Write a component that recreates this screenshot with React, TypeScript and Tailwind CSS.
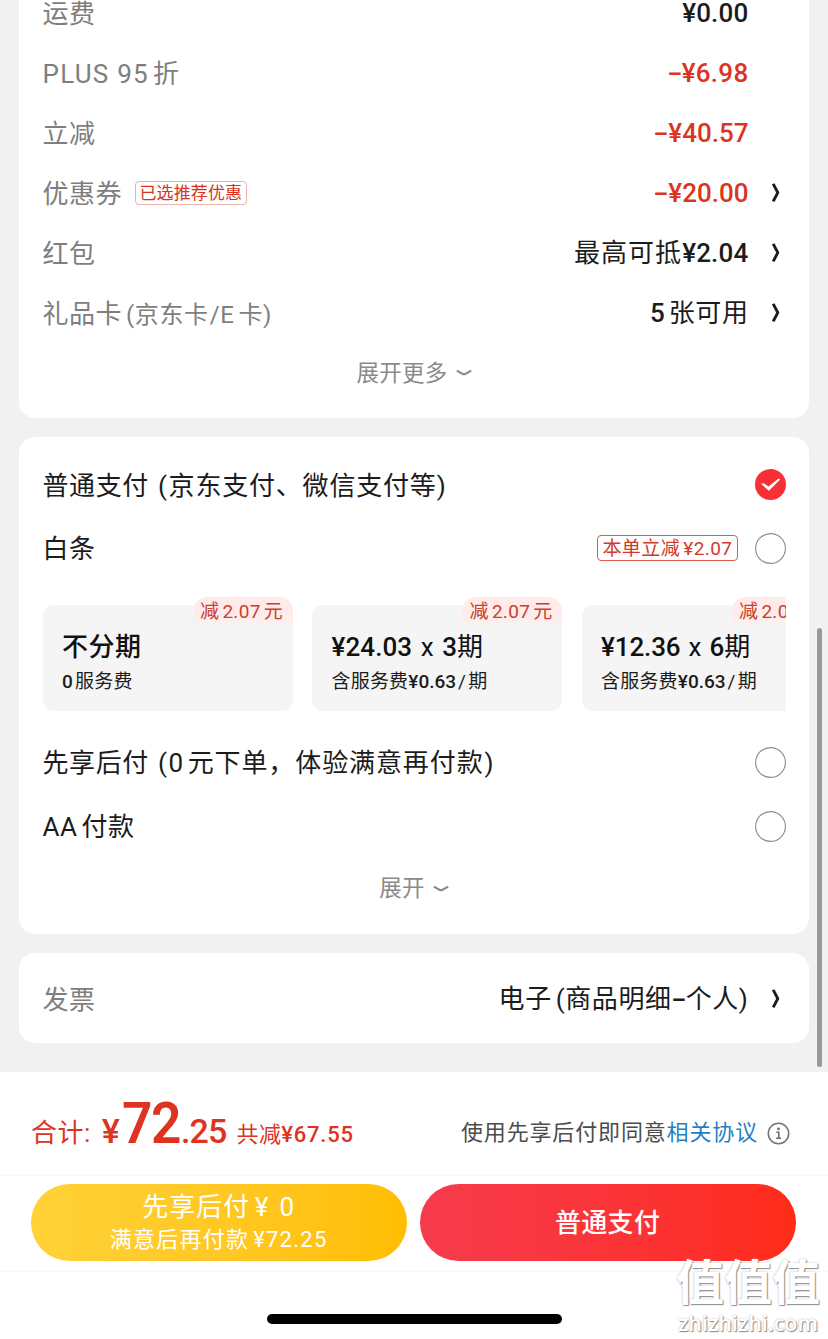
import React, { useState } from 'react';

const RED = 'text-[#dd3320]';

function ArrowRight() {
  return (
    <svg width="12" height="22" viewBox="0 0 12 22" fill="none" className="shrink-0">
      <path d="M3.2 1.8L7.8 10.6L3.2 19.4" stroke="#1c1c1c" strokeWidth="2.9" strokeLinejoin="round" />
    </svg>
  );
}

function ArrowDown() {
  return (
    <svg width="16" height="8" viewBox="0 0 16 8" fill="none" className="shrink-0">
      <path d="M0.8 1.6L6.4 4.7Q8 5.5 9.6 4.7L15.2 1.6" stroke="#8a8a8a" strokeWidth="2.1" />
    </svg>
  );
}

function Dash() {
  return <span className="inline-block w-[14px] scale-x-[1.7] text-center font-medium tracking-normal">-</span>;
}

function Radio({ checked, onClick }: { checked: boolean; onClick: () => void }) {
  return (
    <button onClick={onClick} className="h-[31px] w-[31px] shrink-0">
      <svg width="31" height="31" viewBox="0 0 31 31">
        {checked ? (
          <>
            <circle cx="15.5" cy="15.5" r="15.5" fill="#f92f36" />
            <path d="M6 14.8L8.6 14.2L13.6 17.4L23.6 9.6L25.2 10.6L13.9 21.8Z" fill="#fff" />
          </>
        ) : (
          <circle cx="15.5" cy="15.5" r="14.9" fill="#fff" stroke="#8a8a8a" strokeWidth="1.1" />
        )}
      </svg>
    </button>
  );
}

interface FeeRowProps {
  label: React.ReactNode;
  tag?: string;
  value: React.ReactNode;
  red?: boolean;
  arrow?: boolean;
}

function FeeRow({ label, tag, value, red, arrow }: FeeRowProps) {
  return (
    <div className="flex h-[60px] items-center">
      <span className="pt-px tracking-[0.5px] text-[#7e7e7e]">{label}</span>
      {tag && (
        <span className="ml-[13px] flex h-[24px] items-center rounded-[4px] border border-[#e9b3ad] px-[3.5px] text-[17px] tracking-[0.1px] text-[#d8331f]">
          {tag}
        </span>
      )}
      <span className={`ml-auto ${red ? RED : 'text-[#1c1c1c]'}`}>{value}</span>
      <span className="flex w-[37px] justify-end pr-[4px]">{arrow && <ArrowRight />}</span>
    </div>
  );
}

const plans = [
  {
    id: 'p1',
    title: <span className="font-medium tracking-[0.5px]">不分期</span>,
    fee: <><b className="font-medium">0</b><span className="ml-[2px]">服务费</span></>,
  },
  {
    id: 'p3',
    title: <><b className="font-medium tracking-[0.1px]">¥24.03</b><span className="mx-[8.5px]">x</span><b className="font-medium">3</b>期</>,
    fee: <>含服务费<b className="font-medium tracking-normal">¥0.63</b><span className="mx-[2px]">/</span>期</>,
  },
  {
    id: 'p6',
    title: <><b className="font-medium tracking-[-0.1px]">¥12.36</b><span className="mx-[8px]">x</span><b className="font-medium">6</b>期</>,
    fee: <>含服务费<b className="font-medium tracking-normal">¥0.63</b><span className="mx-[2px]">/</span>期</>,
  },
];

export default function App() {
  const [method, setMethod] = useState('normal');

  return (
    <div className="relative flex h-[1339px] w-[828px] flex-col overflow-hidden bg-[#f1f1f1] font-[Roboto,'Noto_Sans_CJK_SC',sans-serif] text-[26px] leading-none whitespace-nowrap text-[#1c1c1c]">
      <main className="flex h-[1072px] shrink-0 flex-col gap-[19.5px] overflow-hidden pr-[19.5px] pl-[19px]">
        <section className="-mt-[17px] h-[434.5px] shrink-0 rounded-b-[16px] bg-white pr-[23px] pl-[23.5px]">
          <FeeRow label="运费" value={<b className="font-medium tracking-[0.2px]">¥0.00</b>} />
          <FeeRow
            label={<><span className="tracking-[1.25px]">PLUS 95</span><span className="ml-[4px]">折</span></>}
            value={<b className="font-medium tracking-[0.3px]"><Dash />¥6.98</b>}
            red
          />
          <FeeRow label="立减" value={<b className="font-medium"><Dash />¥40.57</b>} red />
          <FeeRow label="优惠券" tag="已选推荐优惠" value={<b className="font-medium"><Dash />¥20.00</b>} red arrow />
          <FeeRow label="红包" value={<><span className="tracking-[1px]">最高可抵</span><b className="font-medium tracking-[0.2px]">¥2.04</b></>} arrow />
          <FeeRow
            label={<>礼品卡<span className="ml-[4px] text-[24px] tracking-[0.6px]">(京东卡<span className="ml-px">/E</span><span className="ml-[4px]">卡)</span></span></>}
            value={<><b className="font-medium">5</b><span className="ml-[4px] tracking-[0.6px]">张可用</span></>}
            arrow
          />
          <div className="flex h-[60px] items-center justify-center gap-[8px] text-[22.5px] tracking-[0.3px] text-[#8a8a8a]">
            展开更多
            <ArrowDown />
          </div>
        </section>

        <section className="h-[496.5px] shrink-0 rounded-[16px] bg-white pt-[15px] pr-[23px] pl-[23.5px]">
          <div className="flex h-[64px] items-center justify-between">
            <span className="pt-[3px] tracking-[0.6px]">
              普通支付<span className="ml-[9px] tracking-[0.8px]">(<span className="ml-px">京东支付、微信支付等</span>)</span>
            </span>
            <Radio checked={method === 'normal'} onClick={() => setMethod('normal')} />
          </div>
          <div className="flex h-[64px] items-center">
            <span className="pt-[2px] tracking-[0.5px]">白条</span>
            <span className="mr-[17px] ml-auto flex h-[26px] items-center rounded-[4px] border border-[#dc5b4d] px-[4px] pt-px text-[19px] tracking-[0.45px] text-[#cf3a2a]">
              本单立减<span className="ml-[3px]">¥2.07</span>
            </span>
            <Radio checked={method === 'baitiao'} onClick={() => setMethod('baitiao')} />
          </div>

          <div className="flex h-[131px] items-end gap-[19.5px] overflow-hidden">
            {plans.map((plan) => (
              <div key={plan.id} className="relative flex h-[106px] w-[250px] shrink-0 flex-col rounded-[11px] bg-[#f5f5f5] pl-[19.5px]">
                <div className="absolute -top-[8px] right-0 h-[32px] w-[100px] rounded-l-[14px] rounded-tr-[14px] bg-linear-to-b from-[#ffebe9] via-[#ffebe9] to-[#f5f5f5] pt-[5px] pr-[2px] text-center text-[19px] tracking-[0.3px] text-[#c8402f]">
                  减<span className="mx-[3px]">2.07</span>元
                </div>
                <div className="mt-[24px] flex h-[36px] items-center text-[#111]">{plan.title}</div>
                <div className="mt-[3px] flex h-[26px] items-center text-[19px] tracking-[0.2px]">{plan.fee}</div>
              </div>
            ))}
          </div>

          <div className="mt-[19px] flex h-[64px] items-center justify-between">
            <span className="pt-[2px] tracking-[0.6px]">
              先享后付<span className="ml-[9px]">(</span><span className="ml-px">0</span><span className="ml-[4px] tracking-[0.9px]">元下单，体验满意再付款<span className="ml-px">)</span></span>
            </span>
            <Radio checked={method === 'later'} onClick={() => setMethod('later')} />
          </div>
          <div className="flex h-[64px] items-center justify-between">
            <span className="pt-px tracking-[0.5px]">AA<span className="ml-[4px]">付款</span></span>
            <Radio checked={method === 'aa'} onClick={() => setMethod('aa')} />
          </div>
          <div className="flex h-[60px] items-center justify-center gap-[8px] pt-px text-[22.5px] tracking-[0.3px] text-[#8a8a8a]">
            展开
            <ArrowDown />
          </div>
        </section>

        <section className="h-[90px] shrink-0 rounded-[16px] bg-white pt-[16px] pr-[23px] pl-[23.5px]">
          <FeeRow label="发票" value={<span className="tracking-[0.6px]">电子<span className="ml-[4px]">(</span>商品明细<Dash />个人)</span>} arrow />
        </section>
      </main>

      <footer className="flex flex-1 flex-col bg-white">
        <div className="flex h-[103px] items-center justify-between pr-[38px] pl-[31px]">
          <div className={`-mt-px flex items-baseline ${RED}`}>
            <span className="relative -top-px tracking-[0.5px]">合计:</span>
            <b className="ml-[11px] text-[34px] font-medium">¥</b>
            <b className="ml-[2px] inline-block w-[59px] origin-left scale-x-[0.92] text-[58px] font-semibold tracking-[-1.5px]">72</b>
            <b className="text-[34px] font-medium tracking-[-0.8px]">.25</b>
            <span className="relative -top-px ml-[10px] text-[22px] tracking-[0.3px]">共减<b className="font-medium tracking-[0.8px]">¥67.55</b></span>
          </div>
          <div className="mt-[19px] flex items-center text-[22px] tracking-[0.85px] text-[#4c4c4c]">
            使用先享后付即同意<a className="text-[#1f7fc8]">相关协议</a>
            <svg width="23" height="23" viewBox="0 0 23 23" fill="none" className="ml-[9px]">
              <circle cx="11.5" cy="11.5" r="10.2" stroke="#777" strokeWidth="1.6" />
              <circle cx="11.5" cy="6.8" r="1.4" fill="#666" />
              <path d="M9.4 10.2H11.8V16M9.2 16.2H14" stroke="#666" strokeWidth="1.5" />
            </svg>
          </div>
        </div>
        <div className="flex h-[97px] gap-[13px] border-y border-[#f9f9f9] px-[30.6px] pt-[7.6px] text-white">
          <button className="flex h-[77px] w-[376px] flex-col items-center justify-center gap-[9px] rounded-full bg-linear-to-r from-[#ffd236] to-[#ffbe00]">
            <span className="tracking-[0.9px]">先享后付<span className="ml-[5px]">¥</span><span className="ml-[10px]">0</span></span>
            <span className="text-[22px] tracking-[1.25px]">满意后再付款<span className="ml-[4px]">¥72.25</span></span>
          </button>
          <button className="flex h-[77px] w-[376px] items-center justify-center rounded-full bg-linear-to-r from-[#f63b4d] to-[#ff2b17] pt-px font-medium tracking-[0.3px]">
            普通支付
          </button>
        </div>
        <div className="mx-auto mt-[42px] h-[10px] w-[295px] rounded-full bg-black" />
      </footer>

      {/* scroll indicator */}
      <div className="absolute top-[628px] right-[6px] h-[439px] w-[5px] rounded-full bg-[#999]" />

      {/* site watermark */}
      <div className="absolute right-[8px] bottom-[6px] flex flex-col items-center text-white [text-shadow:1px_1px_1px_#8c8c8c,0_0_2px_#b5b5b5]">
        <span className="text-[48px] font-bold">值值值</span>
        <span className="mt-[4px] font-['Open_Sans',sans-serif] text-[21.5px] font-semibold">zhizhizhi.com</span>
      </div>
    </div>
  );
}
